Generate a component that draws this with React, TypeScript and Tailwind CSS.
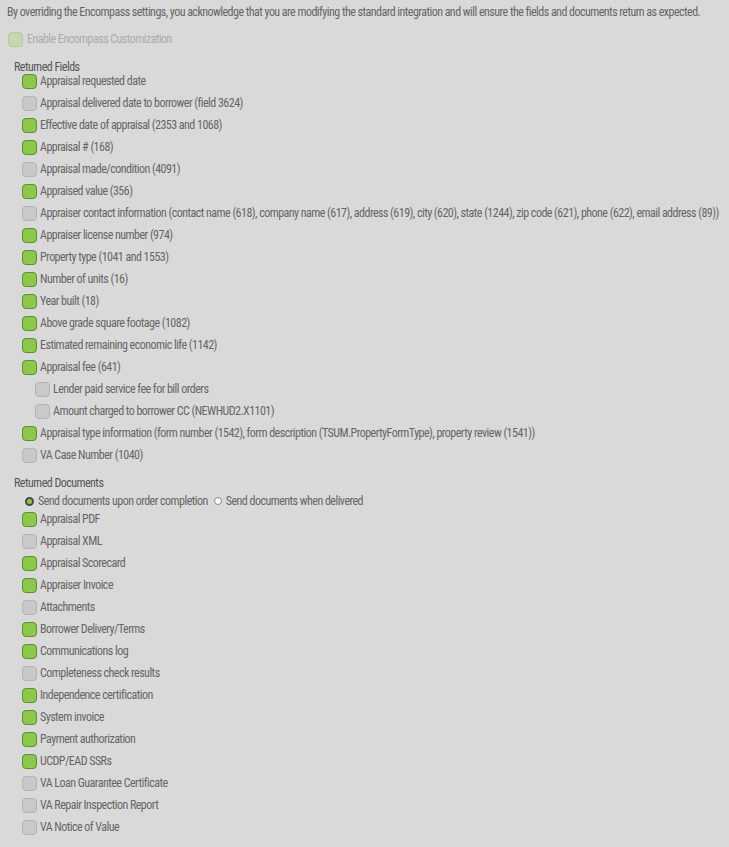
const fields: [string, boolean, boolean?][] = [
  ["Appraisal requested date", true],
  ["Appraisal delivered date to borrower (field 3624)", false],
  ["Effective date of appraisal (2353 and 1068)", true],
  ["Appraisal # (168)", true],
  ["Appraisal made/condition (4091)", false],
  ["Appraised value (356)", true],
  ["Appraiser contact information (contact name (618), company name (617), address (619), city (620), state (1244), zip code (621), phone (622), email address (89))", false],
  ["Appraiser license number (974)", true],
  ["Property type (1041 and 1553)", true],
  ["Number of units (16)", true],
  ["Year built (18)", true],
  ["Above grade square footage (1082)", true],
  ["Estimated remaining economic life (1142)", true],
  ["Appraisal fee (641)", true],
  ["Lender paid service fee for bill orders", false, true],
  ["Amount charged to borrower CC (NEWHUD2.X1101)", false, true],
  ["Appraisal type information (form number (1542), form description (TSUM.PropertyFormType), property review (1541))", true],
  ["VA Case Number (1040)", false],
];

const docs: [string, boolean][] = [
  ["Appraisal PDF", true],
  ["Appraisal XML", false],
  ["Appraisal Scorecard", true],
  ["Appraiser Invoice", true],
  ["Attachments", false],
  ["Borrower Delivery/Terms", true],
  ["Communications log", true],
  ["Completeness check results", false],
  ["Independence certification", true],
  ["System invoice", true],
  ["Payment authorization", true],
  ["UCDP/EAD SSRs", true],
  ["VA Loan Guarantee Certificate", false],
  ["VA Repair Inspection Report", false],
  ["VA Notice of Value", false],
];

function Box({ on }: { on: boolean }) {
  return (
    <span
      className={
        "inline-block w-[15px] h-[15px] rounded-[4px] border shrink-0 " +
        (on ? "bg-[#8cc84b] border-[#5f8f2e]" : "bg-[#c9c9c9] border-[#b3b3b3]")
      }
    />
  );
}

function Row({ label, on, nested }: { label: string; on: boolean; nested?: boolean }) {
  return (
    <div className={"flex items-center h-[22px] gap-[3px] " + (nested ? "pl-[28px]" : "pl-[15px]")}>
      <Box on={on} />
      <span className="whitespace-nowrap">{label}</span>
    </div>
  );
}

export default function App() {
  return (
    <div
      className="w-[729px] min-h-[847px] bg-[#d9d9d9] text-[#666666] text-[12px] leading-[16px] pl-[7px] pt-[4px] tracking-[-0.53px]"
      style={{ fontFamily: "'Roboto Condensed', Roboto, 'Liberation Sans', sans-serif" }}
    >
      <p className="whitespace-nowrap">
        By overriding the Encompass settings, you acknowledge that you are modifying the standard integration and will ensure the fields and documents return as expected.
      </p>
      <div className="flex items-center gap-[4px] mt-[11px] pl-[1px] text-[#ababab]">
        <span className="inline-block w-[15px] h-[15px] rounded-[4px] border bg-[#c3d9ab] border-[#b5c9a0]" />
        <span>Enable Encompass Customization</span>
      </div>
      <div className="mt-[12px] pl-[7px] text-[#555555]">Returned Fields</div>
      <div className="-mt-[5px]">
        {fields.map(([l, on, n]) => (
          <Row key={l} label={l} on={on} nested={n} />
        ))}
      </div>
      <div className="mt-[9px] pl-[7px] text-[#555555]">Returned Documents</div>
      <div className="flex items-center h-[16px] mt-[2px] pl-[18px] gap-[4px]">
        <span className="w-[9px] h-[9px] rounded-full border-[2px] border-[#4a4a4a] bg-[#8cc84b] shrink-0" />
        <span>Send documents upon order completion</span>
        <span className="ml-[2px] w-[8px] h-[8px] rounded-full border border-[#888] bg-white shrink-0" />
        <span>Send documents when delivered</span>
      </div>
      <div className="-mt-[1px]">
        {docs.map(([l, on]) => (
          <Row key={l} label={l} on={on} />
        ))}
      </div>
    </div>
  );
}
